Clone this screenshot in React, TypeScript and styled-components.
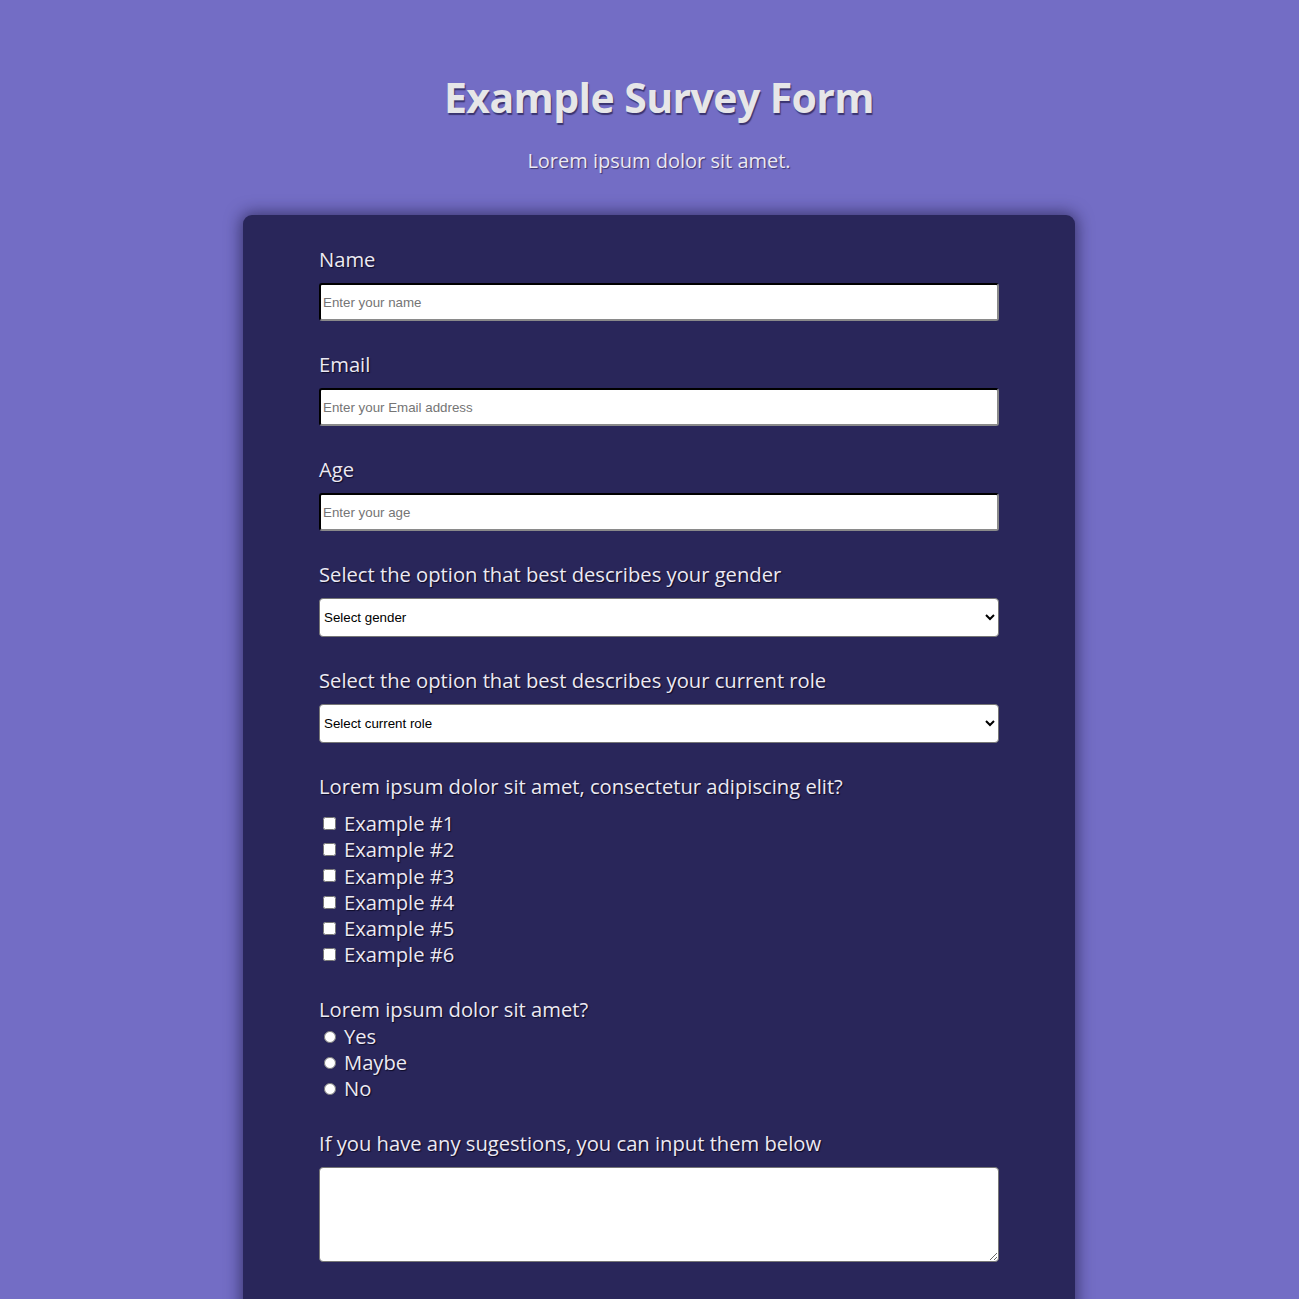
import React from "react";
import styled, { createGlobalStyle } from "styled-components";

const Global = createGlobalStyle`
  html, body { margin: 0; padding: 0; }
  body {
    background: #736dc5;
    font-family: "Open Sans", "Noto Sans", sans-serif;
    color: #e8e6ee;
  }
`;

const Page = styled.div`
  display: flex;
  flex-direction: column;
  align-items: center;
  padding: 70px 0 0 19px;
`;

const Title = styled.h1`
  margin: 0;
  font-size: 41px;
  font-weight: 700;
  letter-spacing: -0.6px;
  color: #e6e6e8;
  text-shadow: 1px 2px 1px #3a3470;
  line-height: 54px;
`;

const Subtitle = styled.p`
  margin: 25px 0 0;
  font-size: 20px;
  font-weight: 500;
  line-height: 24px;
  color: #ebe9f2;
  text-shadow: 1px 1px 1px #3a3470;
`;

const Card = styled.form`
  margin-top: 42px;
  width: 832px;
  box-sizing: border-box;
  background: #29265a;
  border-radius: 9px;
  box-shadow: 0 0 16px 2px rgba(20, 16, 50, 0.6);
  padding: 30px 76px 60px 76px;
  display: flex;
  flex-direction: column;
  gap: 29px;
`;

const Group = styled.div<{ $shift?: number }>`
  display: flex;
  flex-direction: column;
  margin-top: ${(p) => p.$shift ?? 0}px;
`;

const Label = styled.label<{ $after?: number }>`
  margin: 0 0 ${(p) => p.$after ?? 10}px;
  font-size: 20.2px;
  font-weight: 500;
  line-height: 28px;
  color: #ece9f3;
  text-shadow: 1px 1px 1px #0c0a26;
`;

const Input = styled.input`
  box-sizing: border-box;
  width: 100%;
  height: 38px;
  border: 2px inset #767676;
  border-color: #2a2a2a #8a8a8a #8a8a8a #2a2a2a;
  border-radius: 3px;
  background: #fff;
  font-family: "Liberation Sans", Arial, sans-serif;
  font-size: 13.33px;
  padding: 0 2px;
  &::placeholder { color: #757575; }
`;

const Select = styled.select`
  box-sizing: border-box;
  width: 100%;
  height: 39px;
  border: 1px solid #767676;
  border-radius: 4px;
  background: #fff;
  font-family: "Liberation Sans", Arial, sans-serif;
  font-size: 13.33px;
  color: #000;
  padding: 0;
`;

const OptionList = styled.div<{ $row: number }>`
  display: flex;
  flex-direction: column;
  line-height: ${(p) => p.$row}px;
`;

const OptionRow = styled.label`
  display: flex;
  align-items: center;
  font-size: 20.2px;
  font-weight: 500;
  color: #ece9f3;
  text-shadow: 1px 1px 1px #0c0a26;
`;

const Check = styled.input`
  margin: 0 8px 0 4px;
  width: 13px;
  height: 13px;
`;

const Radio = styled.input`
  margin: 3px 8px 0 5px;
  width: 12px;
  height: 12px;
`;

const TextArea = styled.textarea`
  box-sizing: border-box;
  width: 100%;
  height: 95px;
  border: 1px solid #767676;
  border-radius: 4px;
  background: #fff;
  font-family: "Liberation Mono", monospace;
`;

const checks = [1, 2, 3, 4, 5, 6];
const radios = ["Yes", "Maybe", "No"];

export default function App() {
  return (
    <>
      <Global />
      <Page>
        <Title>Example Survey Form</Title>
        <Subtitle>Lorem ipsum dolor sit amet.</Subtitle>
        <Card onSubmit={(e) => e.preventDefault()}>
          <Group>
            <Label htmlFor="name">Name</Label>
            <Input id="name" type="text" placeholder="Enter your name" />
          </Group>
          <Group>
            <Label htmlFor="email">Email</Label>
            <Input id="email" type="email" placeholder="Enter your Email address" />
          </Group>
          <Group>
            <Label htmlFor="age">Age</Label>
            <Input id="age" type="number" placeholder="Enter your age" />
          </Group>
          <Group>
            <Label htmlFor="gender">Select the option that best describes your gender</Label>
            <Select id="gender" defaultValue="">
              <option value="" disabled>Select gender</option>
              <option>Male</option>
              <option>Female</option>
              <option>Other</option>
            </Select>
          </Group>
          <Group>
            <Label htmlFor="role">Select the option that best describes your current role</Label>
            <Select id="role" defaultValue="">
              <option value="" disabled>Select current role</option>
              <option>Student</option>
              <option>Full time job</option>
              <option>Other</option>
            </Select>
          </Group>
          <Group>
            <Label as="p">Lorem ipsum dolor sit amet, consectetur adipiscing elit?</Label>
            <OptionList $row={26.3}>
              {checks.map((n) => (
                <OptionRow key={n}>
                  <Check type="checkbox" />
                  Example #{n}
                </OptionRow>
              ))}
            </OptionList>
          </Group>
          <Group $shift={-2}>
            <Label as="p" $after={0}>Lorem ipsum dolor sit amet?</Label>
            <OptionList $row={26}>
              {radios.map((r) => (
                <OptionRow key={r}>
                  <Radio type="radio" name="q2" />
                  {r}
                </OptionRow>
              ))}
            </OptionList>
          </Group>
          <Group $shift={-1}>
            <Label htmlFor="sugg">If you have any sugestions, you can input them below</Label>
            <TextArea id="sugg" />
          </Group>
        </Card>
      </Page>
    </>
  );
}
